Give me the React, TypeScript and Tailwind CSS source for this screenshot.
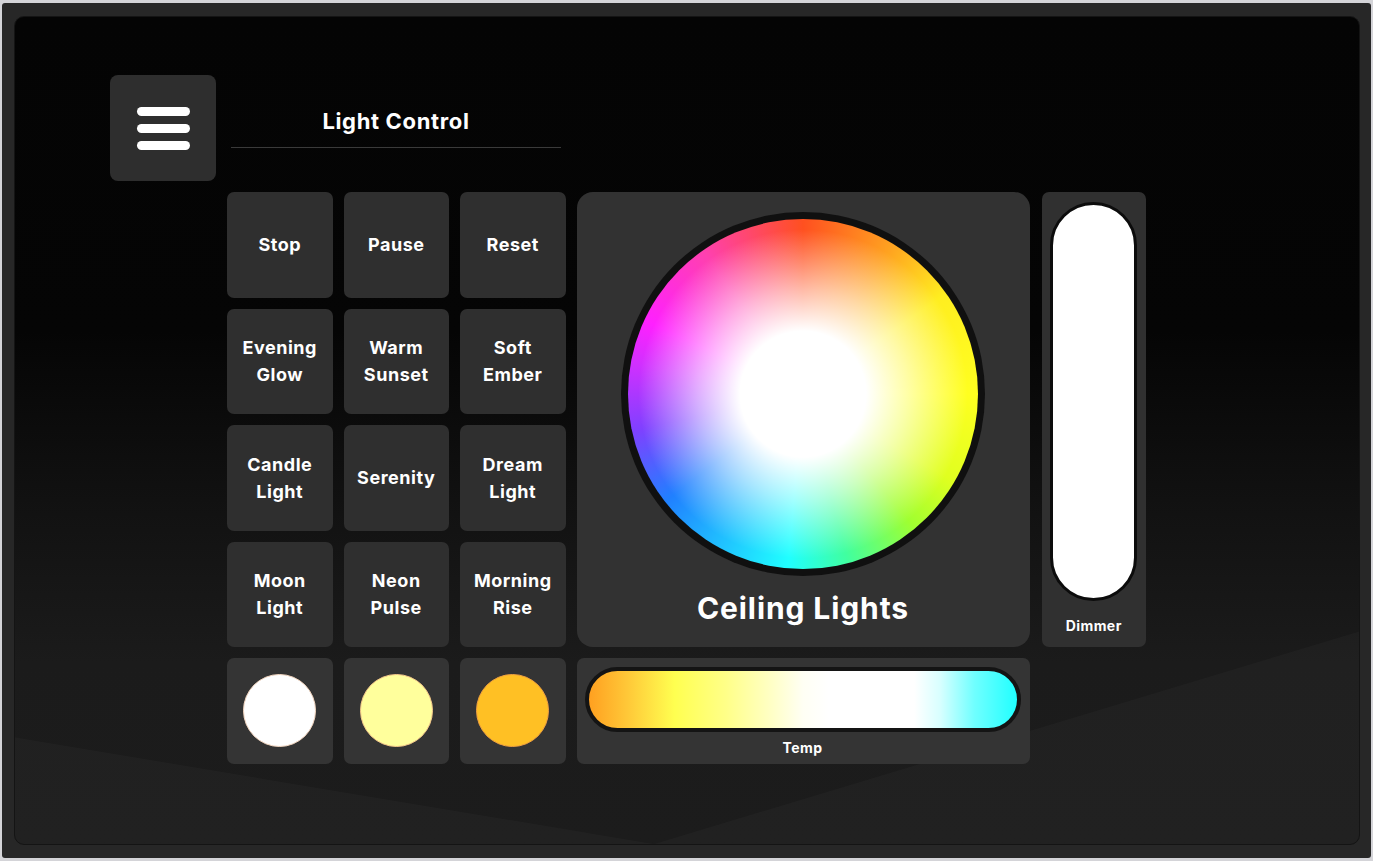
const presets = [
  ["Stop"],
  ["Pause"],
  ["Reset"],
  ["Evening", "Glow"],
  ["Warm", "Sunset"],
  ["Soft", "Ember"],
  ["Candle", "Light"],
  ["Serenity"],
  ["Dream", "Light"],
  ["Moon", "Light"],
  ["Neon", "Pulse"],
  ["Morning", "Rise"],
];

const swatches = [
  "bg-white border-[#f3d6c0]",
  "bg-[#ffff9c] border-[#f5c88a]",
  "bg-[#ffc024] border-[#f0a040]",
];

export default function App() {
  return (
    <div className="w-[1373px] h-[861px] bg-[#d4d4d8] pt-[3px] pb-[3px] pl-[2px] pr-[2px] font-['Inter','Liberation_Sans',sans-serif] text-white">
      <div className="w-full h-full bg-[#272727] rounded-[3px] pt-[13px] pl-[12px] pr-[11px] pb-[13px]">
        <Screen />
      </div>
    </div>
  );
}

function Screen() {
  return (
    <div className="relative w-full h-full rounded-[10px] overflow-hidden border border-[#141414] bg-[linear-gradient(to_bottom,#040404_0%,#050505_38%,#121212_60%,#1b1b1b_78%,#1c1c1c_100%)]">
      {/* floor plane in the backdrop */}
      <svg className="absolute inset-0 w-full h-full" viewBox="0 0 1346 829" preserveAspectRatio="none">
        <polygon points="0,722 640,829 1346,616 1346,829 0,829" fill="#ffffff" fillOpacity="0.022" />
      </svg>

      <div className="relative flex flex-col pl-[95px] pt-[58px]">
        <div className="flex">
          <button className="w-[106px] h-[106px] rounded-[8px] bg-[#2e2e2e] flex flex-col items-center justify-center gap-[8px]">
            <span className="w-[53px] h-[9px] rounded-full bg-white" />
            <span className="w-[53px] h-[9px] rounded-full bg-white" />
            <span className="w-[53px] h-[9px] rounded-full bg-white" />
          </button>
          <div className="ml-[15px] w-[330px] pt-[30px] flex flex-col">
            <h1 className="text-center text-[22px] leading-[33px] font-bold tracking-[0.03em]">Light Control</h1>
            <div className="mt-[9px] h-px bg-[#3a3a3a]" />
          </div>
        </div>

        <div className="ml-[117px] mt-[11px] grid grid-cols-[repeat(3,105.5px)_453px_105.5px] grid-rows-[repeat(5,105.5px)] gap-[11px]">
          {presets.slice(0, 3).map((p) => (
            <Preset key={p.join()} lines={p} />
          ))}

          <div className="row-span-4 rounded-[16px] bg-[#323232] flex flex-col items-center pt-[20px]">
            <ColorWheel />
            <p className="mt-[10px] text-[30px] leading-[45px] font-bold tracking-[0.03em]">Ceiling Lights</p>
          </div>

          <div className="row-span-4 ml-px rounded-[7px] bg-[#303030] flex flex-col items-center pt-[10px]">
            <div className="w-[87px] h-[399px] rounded-full bg-white border-[3px] border-[#0c0c0c]" />
            <p className="mt-[14px] text-[14px] leading-[21px] font-bold tracking-[0.03em]">Dimmer</p>
          </div>

          {presets.slice(3).map((p) => (
            <Preset key={p.join()} lines={p} />
          ))}

          {swatches.map((s) => (
            <div key={s} className="rounded-[7px] bg-[#343434] flex items-center justify-center">
              <div className={`w-[73px] h-[73px] rounded-full border ${s}`} />
            </div>
          ))}

          <div className="rounded-[7px] bg-[#343434] flex flex-col pt-[9px] pl-[8px] pr-[9px]">
            <div className="h-[65px] rounded-full border-[4px] border-[#141414] bg-[linear-gradient(to_right,#ffa020_0%,#ffc838_9%,#ffff50_20%,#ffff88_32%,#ffffc8_43%,#fffff4_50%,#ffffff_56%,#ffffff_76%,#d8ffff_82%,#70ffff_90%,#20ffff_100%)]" />
            <p className="mt-[5px] text-center text-[14px] leading-[21px] font-bold tracking-[0.03em]">Temp</p>
          </div>
        </div>
      </div>
    </div>
  );
}

function Preset({ lines }: { lines: string[] }) {
  return (
    <button className="rounded-[7px] bg-[#2f2f2f] flex flex-col items-center justify-center text-[18px] leading-[27px] font-bold tracking-[0.03em]">
      {lines.map((l) => (
        <span key={l}>{l}</span>
      ))}
    </button>
  );
}

function ColorWheel() {
  return (
    <div className="w-[364px] h-[364px] rounded-full bg-[#101010] p-[7px]">
      <div className="w-full h-full rounded-full bg-[image:radial-gradient(circle_closest-side,#ffffff_0%,#ffffff_36%,rgba(255,255,255,0.6)_60%,rgba(255,255,255,0)_94%),conic-gradient(from_0deg,#ff5020_0deg,#ffa020_30deg,#ffee20_55deg,#ffff20_90deg,#e0ff20_120deg,#a0ff30_140deg,#40ffa0_165deg,#20ffff_185deg,#20b0ff_215deg,#2080ff_232deg,#8040ff_258deg,#d030ff_280deg,#ff20ff_295deg,#ff40b0_325deg,#ff5020_360deg)]" />
    </div>
  );
}
